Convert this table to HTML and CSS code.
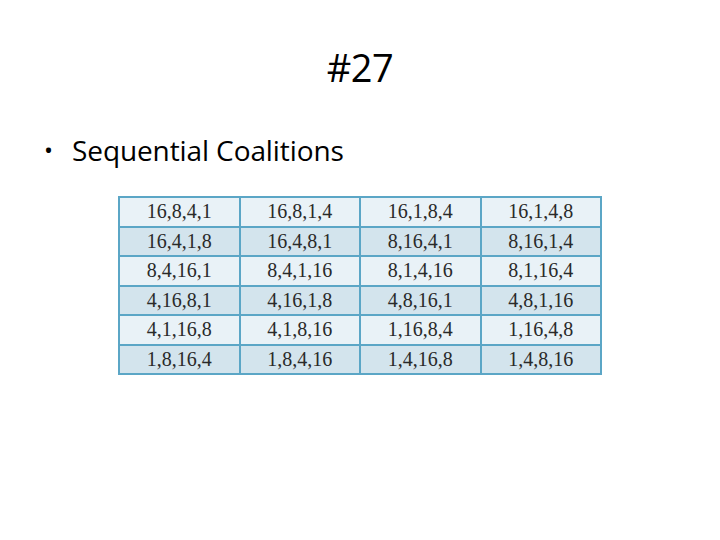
FILE: index.html
```html
<!DOCTYPE html>
<html>
<head>
<meta charset="utf-8">
<link rel="stylesheet" href="styles.css">
</head>
<body>
<div class="slide">
  <h1 class="title">#27</h1>
  <ul class="bullets">
    <li>Sequential Coalitions</li>
  </ul>
  <table class="grid">
    <tr class="odd"><td>16,8,4,1</td><td>16,8,1,4</td><td>16,1,8,4</td><td>16,1,4,8</td></tr>
    <tr class="even"><td>16,4,1,8</td><td>16,4,8,1</td><td>8,16,4,1</td><td>8,16,1,4</td></tr>
    <tr class="odd"><td>8,4,16,1</td><td>8,4,1,16</td><td>8,1,4,16</td><td>8,1,16,4</td></tr>
    <tr class="even"><td>4,16,8,1</td><td>4,16,1,8</td><td>4,8,16,1</td><td>4,8,1,16</td></tr>
    <tr class="odd"><td>4,1,16,8</td><td>4,1,8,16</td><td>1,16,8,4</td><td>1,16,4,8</td></tr>
    <tr class="even"><td>1,8,16,4</td><td>1,8,4,16</td><td>1,4,16,8</td><td>1,4,8,16</td></tr>
  </table>
</div>
</body>
</html>
```
FILE: styles.css
```css
html, body {
  margin: 0;
  padding: 0;
  background: #ffffff;
}
.slide {
  width: 720px;
  height: 540px;
  font-family: "Open Sans", "Noto Sans", sans-serif;
  color: #000;
  overflow: hidden;
}
.title {
  margin: 0;
  padding-top: 43px;
  text-align: center;
  font-weight: normal;
  font-size: 38px;
  line-height: 48px;
  letter-spacing: -0.5px;
}
.bullets {
  list-style: none;
  margin: 0;
  padding: 0 0 0 44px;
  margin-top: 41px;
}
.bullets li {
  font-size: 28px;
  line-height: 36px;
  letter-spacing: -0.1px;
  display: flex;
  align-items: center;
}
.bullets li::before {
  content: "•";
  width: 28px;
  font-size: 24px;
}
.grid {
  border-collapse: collapse;
  margin: 28px 0 0 118px;
  font-family: "Liberation Serif", "DejaVu Serif", serif;
  font-size: 20px;
  color: #2a2a2a;
}
.grid td {
  border: 2px solid #5ba6c6;
  width: 118.5px;
  height: 27.5px;
  padding: 0;
  text-align: center;
  line-height: 27px;
}
.grid tr.odd td { background: #e9f2f7; }
.grid tr.even td { background: #d3e4ed; }
```
